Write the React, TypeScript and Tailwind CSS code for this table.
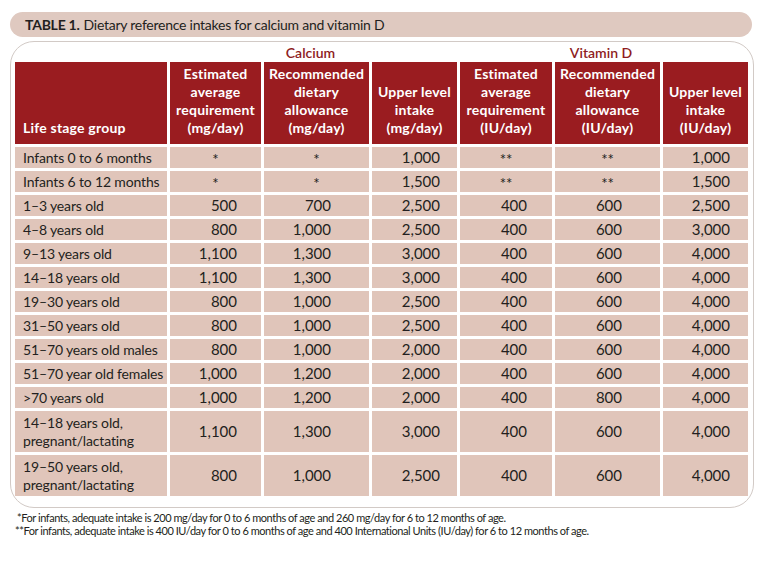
import React from "react";

type Row = { label: string[]; v: string[] };

const rows: Row[] = [
  { label: ["Infants 0 to 6 months"], v: ["*", "*", "1,000", "**", "**", "1,000"] },
  { label: ["Infants 6 to 12 months"], v: ["*", "*", "1,500", "**", "**", "1,500"] },
  { label: ["1–3 years old"], v: ["500", "700", "2,500", "400", "600", "2,500"] },
  { label: ["4–8 years old"], v: ["800", "1,000", "2,500", "400", "600", "3,000"] },
  { label: ["9–13 years old"], v: ["1,100", "1,300", "3,000", "400", "600", "4,000"] },
  { label: ["14–18 years old"], v: ["1,100", "1,300", "3,000", "400", "600", "4,000"] },
  { label: ["19–30 years old"], v: ["800", "1,000", "2,500", "400", "600", "4,000"] },
  { label: ["31–50 years old"], v: ["800", "1,000", "2,500", "400", "600", "4,000"] },
  { label: ["51–70 years old males"], v: ["800", "1,000", "2,000", "400", "600", "4,000"] },
  { label: ["51–70 year old females"], v: ["1,000", "1,200", "2,000", "400", "600", "4,000"] },
  { label: [">70 years old"], v: ["1,000", "1,200", "2,000", "400", "800", "4,000"] },
  { label: ["14–18 years old,", "pregnant/lactating"], v: ["1,100", "1,300", "3,000", "400", "600", "4,000"] },
  { label: ["19–50 years old,", "pregnant/lactating"], v: ["800", "1,000", "2,500", "400", "600", "4,000"] },
];

const numPad = ["pr-[24px]", "pr-[38px]", "pr-[17px]", "pr-[25px]", "pr-[38px]", "pr-[18px]"];

const headers: string[][] = [
  ["Estimated", "average", "requirement", "(mg/day)"],
  ["Recommended", "dietary", "allowance", "(mg/day)"],
  ["Upper level", "intake", "(mg/day)"],
  ["Estimated", "average", "requirement", "(IU/day)"],
  ["Recommended", "dietary", "allowance", "(IU/day)"],
  ["Upper level", "intake", "(IU/day)"],
];

export default function App() {
  const font = { fontFamily: "Lato, 'Noto Sans', sans-serif" };
  return (
    <div
      className="w-[760px] h-[572px] bg-white text-[#231f20] overflow-hidden"
      style={font}
    >
      <div className="pt-[12px] px-[8px] pr-[8px]">
        <div className="ml-[2px] w-[742px] h-[25px] rounded-full bg-[#dfc9c0] flex items-center pl-[15px] text-[14px] tracking-[-0.25px]">
          <span className="font-bold">TABLE 1.</span>
          <span className="ml-[4px]">Dietary reference intakes for calcium and vitamin D</span>
        </div>
      </div>
      <div className="mt-[4px] ml-[10px] w-[744px] h-[467px] border border-[#d2cac6] rounded-[24px] pl-[4px] pr-[5px]">
        <div className="grid grid-cols-[152px_91px_105px_85px_92px_105px_85px] gap-x-[3px] h-[20px] items-center text-[14px] font-semibold text-[#8e1c22]">
          <div />
          <div className="col-span-3 text-center pr-[6px]">Calcium</div>
          <div className="col-span-3 text-center pr-[6px]">Vitamin D</div>
        </div>
        <div className="grid grid-cols-[152px_91px_105px_85px_92px_105px_85px] gap-[3px]">
          <div className="h-[82px] bg-[#9a1c20] text-white font-bold text-[14px] leading-[18px] flex items-end pl-[8px] pb-[7px] tracking-[0.2px]">
            Life stage group
          </div>
          {headers.map((h, i) => (
            <div
              key={i}
              className="h-[82px] bg-[#9a1c20] text-white font-bold text-[14px] leading-[18px] flex flex-col justify-end items-center pb-[7px] tracking-[0.2px]"
            >
              {h.map((l, j) => (
                <div key={j} className="whitespace-nowrap">{l}</div>
              ))}
            </div>
          ))}
          {rows.map((r, ri) => {
            const tall = r.label.length > 1;
            const h = tall ? "h-[41px]" : "h-[21px]";
            return (
              <React.Fragment key={ri}>
                <div className={`${h} bg-[#e0c5ba] pl-[8px] flex flex-col justify-center text-[14px] leading-[18px] tracking-[-0.15px]`}>
                  {r.label.map((l, j) => (
                    <div key={j} className="whitespace-nowrap">{l}</div>
                  ))}
                </div>
                {r.v.map((v, vi) => {
                  const star = v.startsWith("*");
                  return (
                    <div
                      key={vi}
                      className={`${h} bg-[#e0c5ba] flex items-center text-[15px] ${
                        star ? "justify-center text-[13px] pt-[4px]" : `justify-end ${numPad[vi]}`
                      }`}
                    >
                      {v}
                    </div>
                  );
                })}
              </React.Fragment>
            );
          })}
        </div>
      </div>
      <div className="mt-[3px] text-[11px] leading-[13px] tracking-[-0.45px]">
        <div className="pl-[17px]">
          *For infants, adequate intake is 200 mg/day for 0 to 6 months of age and 260 mg/day for 6 to 12 months of age.
        </div>
        <div className="pl-[15px]">
          **For infants, adequate intake is 400 IU/day for 0 to 6 months of age and 400 International Units (IU/day) for 6 to 12 months of age.
        </div>
      </div>
    </div>
  );
}
